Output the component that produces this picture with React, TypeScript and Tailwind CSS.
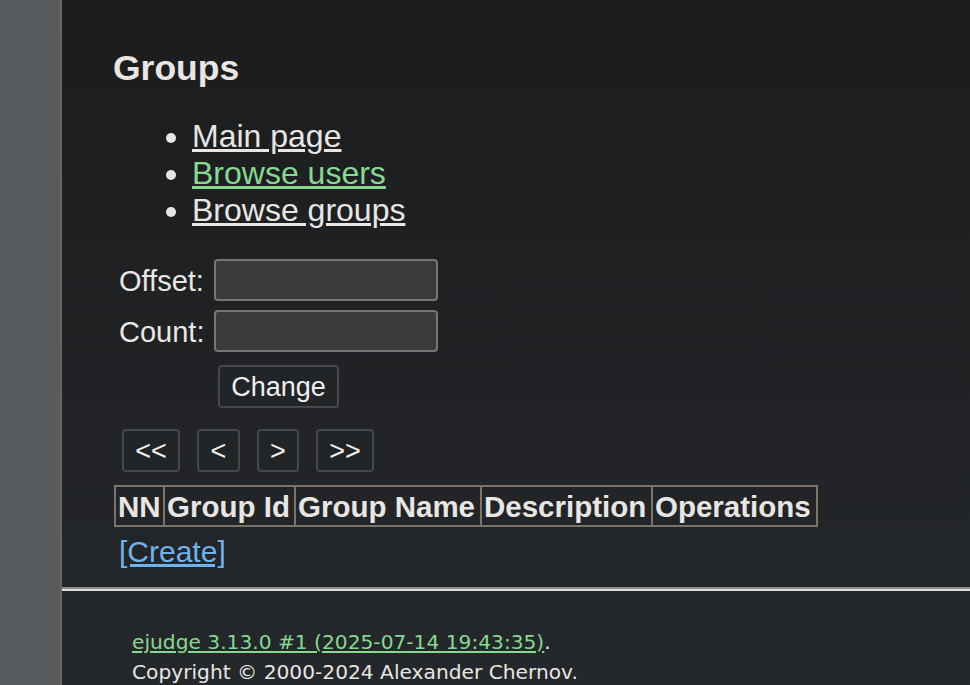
import React from "react";

const sans = { fontFamily: '"Liberation Sans", Arial, sans-serif' };

export default function App() {
  const cols = [
    { t: "NN", w: "w-[47px]" },
    { t: "Group Id", w: "w-[131px]" },
    { t: "Group Name", w: "w-[186px]" },
    { t: "Description", w: "w-[171px]" },
    { t: "Operations", w: "w-[165px]" },
  ];
  const navBtn =
    "h-[43px] rounded-[4px] border-2 border-[#45484b] bg-[#222527] text-[27px] text-[#f0f0f0] flex items-center justify-center pt-[2px]";
  return (
    <div className="flex h-[685px] w-full overflow-hidden" style={sans}>
      <div className="w-[62px] shrink-0 bg-[#575b5e] border-r-2 border-[#6b665e]" />
      <div className="flex-1 flex flex-col bg-gradient-to-b from-[#1b1c1e] to-[#25282b] text-[#e8e6e3]">
        <div className="pl-[51px]">
          <h2 className="mt-[48px] h-[40px] leading-[40px] text-[35.5px] font-bold">Groups</h2>
          <ul className="mt-[30px] list-disc pl-[79px] text-[32px] leading-[37px] marker:text-[#e8e6e3]">
            <li>
              <a href="#" className="underline text-[#e8e6e3]">Main page</a>
            </li>
            <li>
              <a href="#" className="underline text-[#87d98f]">Browse users</a>
            </li>
            <li>
              <a href="#" className="underline text-[#e8e6e3]">Browse groups</a>
            </li>
          </ul>
          <div className="mt-[30px] ml-[6px] flex flex-col text-[29px]">
            <div className="flex items-center h-[42px]">
              <span className="w-[95px] pt-[3px]">Offset:</span>
              <input className="w-[224px] h-[42px] rounded-[4px] border-2 border-[#767676] bg-[#3b3b3b] outline-none" />
            </div>
            <div className="flex items-center h-[42px] mt-[9px]">
              <span className="w-[95px] pt-[3px]">Count:</span>
              <input className="w-[224px] h-[42px] rounded-[4px] border-2 border-[#767676] bg-[#3b3b3b] outline-none" />
            </div>
            <div className="mt-[13px] ml-[99px]">
              <button className={navBtn + " w-[121px]"}>Change</button>
            </div>
          </div>
          <div className="mt-[21px] ml-[9px] flex gap-[17px]">
            <button className={navBtn + " w-[58px]"}>&lt;&lt;</button>
            <button className={navBtn + " w-[43px]"}>&lt;</button>
            <button className={navBtn + " w-[42px]"}>&gt;</button>
            <button className={navBtn + " w-[58px]"}>&gt;&gt;</button>
          </div>
          <div className="mt-[13px] ml-[1px] flex w-fit border-2 border-[#7d7468]">
            {cols.map((c, i) => (
              <div
                key={c.t}
                className={
                  c.w +
                  " h-[38px] flex items-center px-[2px] pt-[2px] text-[29.5px] font-bold whitespace-nowrap " +
                  (i > 0 ? "border-l-2 border-[#7d7468]" : "")
                }
              >
                {c.t}
              </div>
            ))}
          </div>
          <div className="mt-[8px] ml-[6px] h-[33px] leading-[33px] text-[30px] text-[#70b3ec]">
            <a href="#" className="underline">[Create]</a>
          </div>
        </div>
        <div className="mt-[19px] border-t-2 border-[#8e8e8e] border-b-2 border-b-[#dedede]" />
        <div
          className="pl-[70px] pt-[36px] text-[20.2px] leading-[30px]"
          style={{ fontFamily: '"DejaVu Sans", Verdana, sans-serif' }}
        >
          <div>
            <a href="#" className="underline text-[#87d98f]">ejudge 3.13.0 #1 (2025-07-14 19:43:35)</a>.
          </div>
          <div>Copyright © 2000-2024 Alexander Chernov.</div>
        </div>
      </div>
    </div>
  );
}
